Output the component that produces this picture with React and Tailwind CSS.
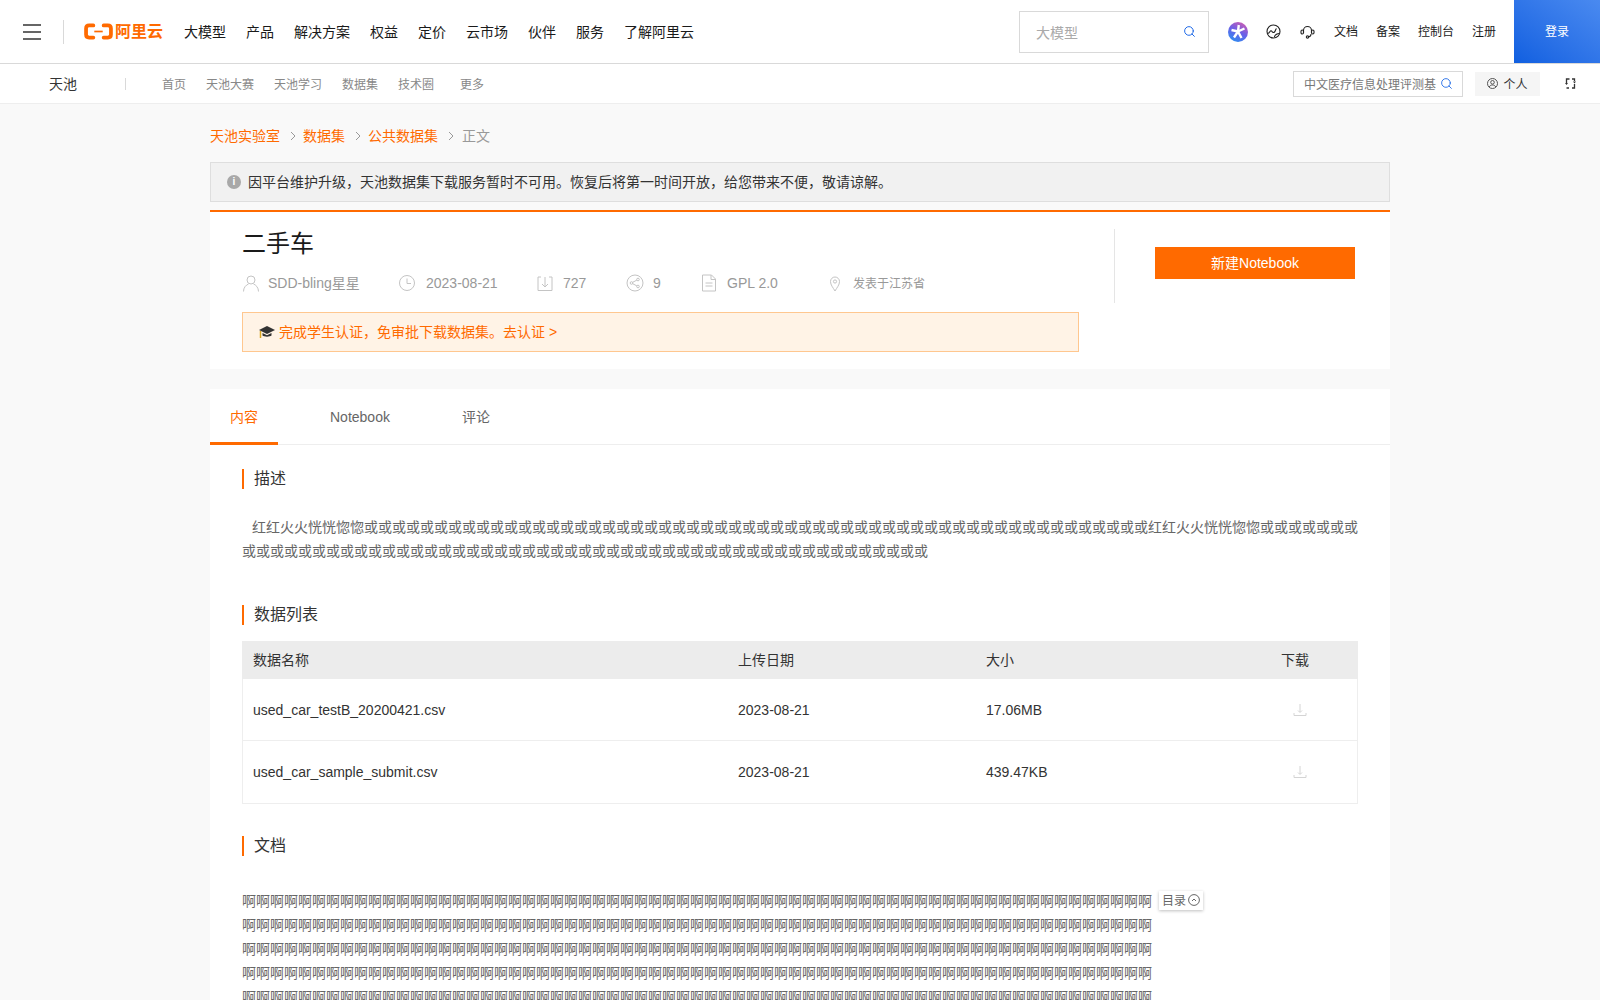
import { Search } from "lucide-react";

const FONT = { fontFamily: '"Liberation Sans", "Noto Sans CJK SC", sans-serif' };

const mainNav = [
  ["大模型", "w-[42px]"],
  ["产品", "w-[28px]"],
  ["解决方案", "w-[56px]"],
  ["权益", "w-[28px]"],
  ["定价", "w-[28px]"],
  ["云市场", "w-[42px]"],
  ["伙伴", "w-[28px]"],
  ["服务", "w-[28px]"],
  ["了解阿里云", "w-[70px]"],
];

const subNav = [
  ["首页", "w-[44px]"],
  ["天池大赛", "w-[68px]"],
  ["天池学习", "w-[68px]"],
  ["数据集", "w-[56px]"],
  ["技术圈", "w-[62px]"],
  ["更多", "w-[30px]"],
];

const files = [
  ["used_car_testB_20200421.csv", "2023-08-21", "17.06MB"],
  ["used_car_sample_submit.csv", "2023-08-21", "439.47KB"],
];

const descText =
  "红红火火恍恍惚惚" + "或".repeat(56) + "红红火火恍恍惚惚" + "或".repeat(56);
const docLine = "啊".repeat(65);

function Logo() {
  return (
    <div className="flex items-center gap-[2px] text-[#ff6a00]">
      <svg width="29" height="19" viewBox="0 0 31 19" fill="none">
        <path d="M10 3H5.500C3.500 3 2.200 4.300 2.200 6.200v6.600C2.200 14.700 3.500 16 5.500 16H10" stroke="#ff6a00" strokeWidth="4" strokeLinecap="round" />
        <path d="M21 3h4.500c2 0 3.300 1.300 3.300 3.200v6.600c0 1.900-1.300 3.200-3.300 3.200H21" stroke="#ff6a00" strokeWidth="4" strokeLinecap="round" />
        <rect x="11" y="8.600" width="9" height="1.800" fill="#ff6a00" />
      </svg>
      <span className="text-[16px] leading-none font-bold">阿里云</span>
    </div>
  );
}

function SectionTitle({ children }) {
  return (
    <div className="flex items-center h-[20px] border-l-2 border-[#ff6a00] pl-[10px] text-base text-[#333]">
      {children}
    </div>
  );
}

function Chevron() {
  return (
    <svg width="6" height="10" viewBox="0 0 6 10" fill="none" className="ml-[10px] mr-[7px]">
      <path d="M1 1l4 4-4 4" stroke="#999" strokeWidth="1" />
    </svg>
  );
}

function MetaIcon({ children, className }) {
  return (
    <svg width="18" height="18" viewBox="0 0 18 18" fill="none" stroke="#c4c4c4" strokeWidth="1" className={className}>
      {children}
    </svg>
  );
}

function DownloadIcon() {
  return (
    <svg width="14" height="14" viewBox="0 0 14 14" fill="none" stroke="#d4d4d4" strokeWidth="1">
      <path d="M7 1v8M5 7.500l2 2 2-2" />
      <path d="M1 10v2.500h12V10" />
    </svg>
  );
}

export default function App() {
  return (
    <div style={FONT} className="h-screen overflow-hidden bg-[#f9f9f9]">
      {/* top bar */}
      <header className="flex h-[64px] items-center justify-between border-b border-[#d9d9d9] bg-white">
        <div className="flex items-center">
          <div className="ml-[23px] flex w-[18px] flex-col gap-[5px]">
            <span className="h-[2px] bg-[#666]" />
            <span className="h-[2px] bg-[#666]" />
            <span className="h-[2px] bg-[#666]" />
          </div>
          <span className="ml-[22px] h-[24px] w-px bg-[#d9d9d9]" />
          <div className="ml-[20px]">
            <Logo />
          </div>
          <nav className="ml-[21px] flex gap-[20px] text-sm text-[#1a1a1a]">
            {mainNav.map(([label, width]) => (
              <span key={label} className={`${width} whitespace-nowrap`}>{label}</span>
            ))}
          </nav>
        </div>
        <div className="flex h-full items-center">
          <div className="mt-px flex h-[42px] w-[190px] items-center justify-between border border-[#d9d9d9] pl-[16px] pr-[12px] text-sm text-[#aaa]">
            <span className="pt-[2px]">大模型</span>
            <Search size={13} color="#1a66e6" strokeWidth={1.800} className="-mt-[2px]" />
          </div>
          <svg width="20" height="20" viewBox="0 0 20 20" className="ml-[19px]">
            <defs>
              <linearGradient id="aiGrad" x1="0.800" y1="0" x2="0.300" y2="1">
                <stop offset="0" stopColor="#d05cb0" />
                <stop offset="0.500" stopColor="#6a60e8" />
                <stop offset="1" stopColor="#2f8cf0" />
              </linearGradient>
            </defs>
            <circle cx="10" cy="10" r="10" fill="url(#aiGrad)" />
            <path d="M10.800 3L10 9.500M3.500 8L10 9.500M16.500 6.500L10 9.500M6 15.500L10 9.500M13.500 16L10 9.500" stroke="#fff" strokeWidth="2.400" fill="none" />
          </svg>
          <svg width="15" height="15" viewBox="0 0 15 15" fill="none" stroke="#222" strokeWidth="1.100" className="ml-[18px]">
            <circle cx="7.500" cy="7.500" r="6.500" />
            <path d="M1.500 9.500c1.500 0 2-1 2.500-2s1.500-1 2 0 1.500 1.500 2.500 0.500 1-3 2-3.500M8.500 13c0-2 2-3 4.500-3.500" />
          </svg>
          <svg width="15" height="14" viewBox="0 0 15 14" fill="none" stroke="#222" strokeWidth="1.100" className="ml-[19px]">
            <path d="M3.500 8V5.500a4 4 0 018 0V8" />
            <rect x="1" y="5" width="2.500" height="4" rx="1.200" />
            <rect x="11.500" y="5" width="2.500" height="4" rx="1.200" />
            <path d="M11 9c0 2-1.500 3-3.500 3" />
            <circle cx="7.500" cy="12" r="1.200" />
          </svg>
          <nav className="ml-[19px] flex gap-[18px] text-xs text-[#1a1a1a]">
            <span>文档</span>
            <span>备案</span>
            <span>控制台</span>
            <span>注册</span>
          </nav>
          <div className="ml-[18px] flex h-full w-[86px] items-center justify-center bg-gradient-to-tr from-[#0f5fe0] to-[#4a8af0] text-xs text-white">
            登录
          </div>
        </div>
      </header>

      {/* tianchi sub bar */}
      <div className="flex h-[40px] items-center justify-between border-b border-[#eee] bg-white">
        <div className="flex items-center">
          <span className="ml-[49px] w-[76px] text-sm text-[#333]">天池</span>
          <span className="h-[12px] w-px bg-[#d9d9d9]" />
          <nav className="ml-[36px] flex pt-[2px] text-xs text-[#888]">
            {subNav.map(([label, width]) => (
              <span key={label} className={`${width} whitespace-nowrap`}>{label}</span>
            ))}
          </nav>
        </div>
        <div className="flex items-center">
          <div className="flex h-[26px] w-[170px] items-center justify-between border border-[#d9d9d9] pl-[10px] pr-[9px] text-xs text-[#777]">
            <span className="whitespace-nowrap pt-[2px]">中文医疗信息处理评测基</span>
            <Search size={13} color="#1a66e6" strokeWidth={1.600} />
          </div>
          <div className="ml-[12px] flex h-[24px] w-[65px] items-center justify-center gap-[5px] bg-[#f5f5f5] text-xs text-[#333]">
            <svg width="11" height="11" viewBox="0 0 11 11" fill="none" stroke="#444" strokeWidth="0.900">
              <circle cx="5.500" cy="5.500" r="5" />
              <circle cx="5.500" cy="4.300" r="1.800" />
              <path d="M2.300 9c0.500-1.500 1.800-2 3.200-2s2.700 0.500 3.200 2" />
            </svg>
            <span className="pt-[2px]">个人</span>
          </div>
          <svg width="11" height="11" viewBox="0 0 11 11" fill="none" stroke="#333" strokeWidth="1.300" className="ml-[25px] mr-[24px]">
            <path d="M4.500 1H1.500v4M7 1h2.500v2M1.500 10H4M9.500 6v4H7" />
            <path d="M0 5h3L1.500 7zM8 3.500h3L9.500 5.500z" fill="#333" stroke="none" />
          </svg>
        </div>
      </div>

      <main className="mx-auto w-[1180px]">
        {/* breadcrumb */}
        <div className="flex h-[58px] items-center pt-[6px] text-sm text-[#ff6a00]">
          <span>天池实验室</span>
          <Chevron />
          <span>数据集</span>
          <Chevron />
          <span>公共数据集</span>
          <Chevron />
          <span className="ml-px text-[#999]">正文</span>
        </div>

        <div className="flex h-[40px] items-center border border-[#dedede] bg-[#f1f1f1] pl-[16px] text-sm text-[#333]">
          <span className="mr-[7px] flex h-[14px] w-[14px] items-center justify-center rounded-full bg-[#a8a8a8] text-[10px] font-bold text-white">i</span>
          因平台维护升级，天池数据集下载服务暂时不可用。恢复后将第一时间开放，给您带来不便，敬请谅解。
        </div>

        {/* dataset header */}
        <section className="mt-[8px] flex h-[159px] border-t-2 border-[#ff6a00] bg-white">
          <div className="ml-[32px] w-[837px] pt-[16px]">
            <h1 className="text-2xl leading-[32px] text-[#1a1a1a]">二手车</h1>
            <div className="mt-[11px] flex h-[24px] items-center text-sm text-[#999]">
              <div className="flex w-[158px] items-center">
                <MetaIcon className="mr-[8px]">
                  <circle cx="9" cy="6" r="4" />
                  <path d="M1.500 17.500c0-4 2.500-6.500 5-7.500M16.500 17.500c0-4-2.500-6.500-5-7.500" />
                </MetaIcon>
                <span className="whitespace-nowrap">SDD-bling星星</span>
              </div>
              <div className="flex w-[137px] items-center">
                <MetaIcon className="-ml-[2px] mr-[10px]">
                  <circle cx="9" cy="9" r="7.500" />
                  <path d="M9 4.500V9.500H13" />
                </MetaIcon>
                <span>2023-08-21</span>
              </div>
              <div className="flex w-[90px] items-center">
                <MetaIcon className="-ml-px mr-[9px]">
                  <path d="M5 3H2v13.500h14V3h-3" />
                  <path d="M9 3v10M6 10l3 3 3-3" />
                </MetaIcon>
                <span>727</span>
              </div>
              <div className="flex w-[75px] items-center">
                <MetaIcon className="-ml-px mr-[9px]">
                  <circle cx="9" cy="9" r="8" />
                  <circle cx="12" cy="5.500" r="1.300" />
                  <circle cx="5.500" cy="9" r="1.300" />
                  <circle cx="12" cy="12.500" r="1.300" />
                  <path d="M6.700 8.300l4.200-2.200M6.700 9.700l4.200 2.200" />
                </MetaIcon>
                <span>9</span>
              </div>
              <div className="flex w-[128px] items-center">
                <MetaIcon className="-ml-[2px] mr-[9px]">
                  <path d="M2.500 1h9l4 4v12h-13z" />
                  <path d="M11 1v4.500h4.500M5.500 9h7M5.500 12h7" />
                </MetaIcon>
                <span>GPL 2.0</span>
              </div>
              <div className="flex items-center text-xs">
                <MetaIcon className="-mt-px -ml-[4px] mr-[9px]">
                  <path d="M9 17c-2-3.500-4.500-6-4.500-9.500a4.500 4.500 0 019 0C13.500 11 11 13.500 9 17z" />
                  <circle cx="9" cy="7.500" r="1.600" />
                </MetaIcon>
                <span className="pt-[2px]">发表于江苏省</span>
              </div>
            </div>
            <div className="mt-[17px] flex h-[40px] items-center border border-[#ffc78f] bg-[#fff3e6] pl-[16px] text-sm text-[#ff6a00]">
              <svg width="16" height="16" viewBox="0 0 16 16" className="mr-[4px]">
                <path d="M8 2L16 6 8 10 0 6z" fill="#333" />
                <path d="M3.500 9v2.500C5 13 11 13 12.500 11.500V9L8 11.200z" fill="#333" />
                <path d="M1.500 7v7" stroke="#d9a520" strokeWidth="1.500" />
              </svg>
              完成学生认证，免审批下载数据集。去认证 &gt;
            </div>
          </div>
          <div className="ml-[35px] mt-[17px] h-[74px] w-px bg-[#e5e5e5]" />
          <div className="ml-[40px] mt-[35px]">
            <button className="h-[32px] w-[200px] bg-[#ff6a00] text-sm text-white">新建Notebook</button>
          </div>
        </section>

        {/* content */}
        <section className="mt-[20px] bg-white">
          <div className="flex h-[56px] gap-[32px] border-b border-[#eee] text-sm text-[#666]">
            <div className="flex h-[56px] items-center border-b-[3px] border-[#ff6a00] px-[20px] pt-[3px] text-[#ff6a00]">内容</div>
            <div className="flex h-[55px] items-center px-[20px]">Notebook</div>
            <div className="flex h-[55px] items-center px-[20px]">评论</div>
          </div>

          <div className="px-[32px] pt-[24px]">
            <SectionTitle>描述</SectionTitle>
            <p className="mt-[26px] break-all text-sm leading-[24px] text-[#666] indent-[10px]">{descText}</p>

            <div className="mt-[42px]">
              <SectionTitle>数据列表</SectionTitle>
            </div>
            <div className="mt-[16px] border border-[#eee] border-t-0 text-sm text-[#333]">
              <div className="-mx-px flex h-[38px] items-center bg-[#ececec]">
                <span className="ml-[11px] w-[485px]">数据名称</span>
                <span className="w-[248px]">上传日期</span>
                <span className="w-[295px]">大小</span>
                <span>下载</span>
              </div>
              {files.map(([name, date, size], i) => (
                <div key={name} className={`flex items-center ${i === 0 ? "h-[62px] border-b border-[#eee]" : "h-[62px]"}`}>
                  <span className="ml-[10px] w-[485px]">{name}</span>
                  <span className="w-[248px]">{date}</span>
                  <span className="w-[295px]">{size}</span>
                  <span className="ml-[12px]"><DownloadIcon /></span>
                </div>
              ))}
            </div>

            <div className="mt-[32px]">
              <SectionTitle>文档</SectionTitle>
            </div>
            <div className="mt-[33px] flex items-start">
              <div className="w-[910px] shrink-0 text-sm leading-[24px] text-[#666]">
                {[0, 1, 2, 3, 4, 5].map((n) => (
                  <div key={n} className="whitespace-nowrap">{docLine}</div>
                ))}
              </div>
              <div className="ml-[7px] mt-[2px] flex h-[19px] w-[44px] items-center justify-center gap-[2px] bg-white text-xs text-[#666] shadow-[0_1px_3px_rgba(0,0,0,0.25)]">
                目录
                <svg width="12" height="12" viewBox="0 0 12 12" fill="none" stroke="#555" strokeWidth="0.900" className="-mt-px">
                  <circle cx="6" cy="6" r="5.400" />
                  <path d="M4 7l2-2 2 2" />
                </svg>
              </div>
            </div>
          </div>
        </section>
      </main>
    </div>
  );
}
